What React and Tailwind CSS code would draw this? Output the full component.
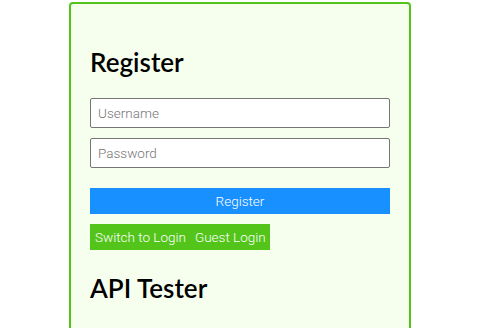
import React from 'react';

const App = () => {
  return (
    <div className="min-h-screen bg-white">
      <div className="ml-[69px] mt-[2px] w-[342px] min-h-[340px] rounded-[4px] border-2 border-[#52c41a] bg-[#f6ffed] px-[19px] pt-[42px]">
        <h2 className="mb-[20px] font-['Lato',sans-serif] text-[26px] font-semibold leading-[32px] text-black">Register</h2>
        <input
          type="text"
          placeholder="Username"
          className="block h-[30px] w-[300px] rounded-[2px] border border-[#767676] bg-white px-[7px] font-['Roboto',sans-serif] text-[13.5px] font-light placeholder:text-[#757575]"
        />
        <input
          type="password"
          placeholder="Password"
          className="mt-[10px] block h-[30px] w-[300px] rounded-[2px] border border-[#767676] bg-white px-[7px] font-['Roboto',sans-serif] text-[13.5px] font-light placeholder:text-[#757575]"
        />
        <button className="mt-[20px] block h-[26px] w-[300px] bg-[#1890ff] font-['Roboto',sans-serif] text-[13.5px] font-light text-white">
          Register
        </button>
        <div className="mt-[10px] flex">
          <button className="h-[26px] bg-[#52c41a] pl-[5px] pr-[4px] font-['Roboto',sans-serif] text-[13.5px] font-light text-white">
            Switch to Login
          </button>
          <button className="h-[26px] bg-[#52c41a] pl-[5px] pr-[4px] font-['Roboto',sans-serif] text-[13.5px] font-light text-white">
            Guest Login
          </button>
        </div>
        <h2 className="mt-[22px] font-['Lato',sans-serif] text-[26px] font-semibold leading-[32px] text-black">API Tester</h2>
      </div>
    </div>
  );
};

export default App;
